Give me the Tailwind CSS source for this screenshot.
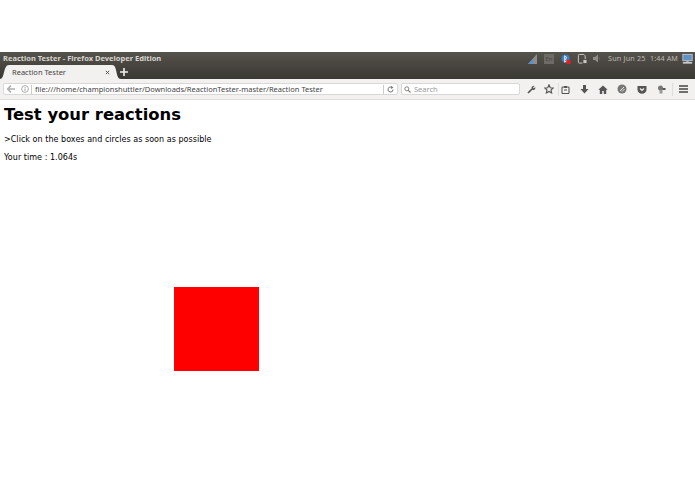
<!DOCTYPE html>
<html>
<head>
<meta charset="utf-8">
<script src="https://cdn.jsdelivr.net/npm/@tailwindcss/browser@4"></script>
</head>
<body class="bg-white m-0 w-[695px] h-[494px] overflow-hidden relative font-['DejaVu_Sans',sans-serif]">
<div class="h-[52px] bg-white"></div>
<div class="h-[27px] bg-gradient-to-b from-[#56524c] to-[#3a3833]">
  <div class="h-[13px] flex items-center justify-between pl-[3px] pr-[2px]">
    <span class="text-[7.500px] font-bold text-[#d8d6d0] font-['Noto_Sans',sans-serif] leading-none">Reaction Tester - Firefox Developer Edition</span>
    <div class="flex items-center text-[#bdbab3]">
      <svg class="w-[9px] h-[10px] mr-[7px]" viewBox="0 0 9 10"><path d="M0 10L9 0v10z" fill="#8d8d8d"/><path d="M0 10l5-5v5z" fill="#5c8fd0"/></svg>
      <span class="w-[10px] h-[10px] mr-[7px] bg-[#6d6b66] text-[6px] leading-[10px] text-center text-[#45433f] font-['Noto_Sans',sans-serif]">En</span>
      <svg class="w-[10px] h-[12px] mr-[6px]" viewBox="0 0 11 12"><circle cx="5" cy="5.500" r="4.500" fill="#3f7cc0"/><path d="M4 2.500l2.500 2-2 1.500 2 2-2.500 1.500z" fill="none" stroke="#fff" stroke-width=".9"/><rect x="6" y="7" width="4.500" height="4.500" fill="#e02020"/></svg>
      <svg class="w-[10px] h-[12px] mr-[6px]" viewBox="0 0 11 12"><path d="M2.500 1h5l1.500 1.500V6M6 10.500H2.500a1 1 0 0 1-1-1V2a1 1 0 0 1 1-1" fill="none" stroke="#c8c6c0" stroke-width="1.100"/><rect x="7" y="7" width="3.500" height="3.500" fill="#c8c6c0"/></svg>
      <svg class="w-[9px] h-[9px] mr-[6px]" viewBox="0 0 9 9"><path d="M0 3h2l3-2.500v8L2 6H0z" fill="#8f8d87"/><path d="M6.500 3v3" stroke="#605e59"/></svg>
      <span class="w-[38px] text-[7.200px] leading-none whitespace-nowrap tracking-[0.2px] font-['Noto_Sans',sans-serif] mr-[4px]">Sun Jun 25</span>
      <span class="w-[26px] text-[7.200px] leading-none whitespace-nowrap tracking-[0.1px] font-['Noto_Sans',sans-serif] mr-[6px]">1:44 AM</span>
      <svg class="w-[11px] h-[12px]" viewBox="0 0 13 12"><rect x="1" y=".5" width="11" height="7.500" fill="#5f93c8" stroke="#c8ccd0"/><rect x="5" y="8" width="3" height="1.500" fill="#b0b0b0"/><rect x="1" y="9.500" width="11" height="2" fill="#c8ccd0"/></svg>
    </div>
  </div>
  <div class="h-[14px] flex items-end">
    <div class="relative w-[121px] h-[14px] flex items-center justify-between pl-[12px] pr-[11px]">
      <svg class="absolute inset-0 w-[121px] h-[14px]" viewBox="0 0 121 14"><path d="M0 14C5 14 3 0 9 0L112 0C118 0 115 14 121 14Z" fill="#f2f1ef"/></svg>
      <span class="relative text-[7.500px] leading-none text-[#444] font-['Noto_Sans',sans-serif] mt-[1px]">Reaction Tester</span>
      <svg class="relative w-[5px] h-[5px]" viewBox="0 0 6 6"><path d="M1 1l4 4M5 1L1 5" stroke="#555" stroke-width="1.200"/></svg>
    </div>
    <svg class="w-[8px] h-[8px] mb-[3px] -ml-px" viewBox="0 0 8 8"><path d="M4 0v8M0 4h8" stroke="#f0f0f0" stroke-width="1.600"/></svg>
  </div>
</div>
<div class="h-[21px] bg-[#f2f1ef] border-b border-[#dcdcda] flex items-center">
  <div class="ml-[3px] w-[395px] h-[12px] bg-white border border-[#d8d8d6] rounded-[2px] flex items-center shrink-0">
    <svg class="w-[8px] h-[8px] ml-[3px] shrink-0" viewBox="0 0 7 7"><path d="M3.500 .5L.5 3.500l3 3M1 3.500h6" fill="none" stroke="#b0b0b0" stroke-width="1.400"/></svg>
    <svg class="w-[8px] h-[8px] ml-[6px] shrink-0" viewBox="0 0 8 8"><circle cx="4" cy="4" r="3.400" fill="none" stroke="#999" stroke-width=".8"/><path d="M4 3.500v2.500M4 2v.8" stroke="#999" stroke-width=".9"/></svg>
    <span class="w-px h-[9px] bg-[#ccc] ml-[2px] shrink-0"></span>
    <span class="ml-[3px] mt-[1px] text-[7.500px] leading-none text-[#444] font-['Noto_Sans',sans-serif] grow whitespace-nowrap">file:///home/championshuttler/Downloads/ReactionTester-master/Reaction Tester</span>
    <span class="w-px h-[9px] bg-[#ccc] shrink-0"></span>
    <svg class="w-[7px] h-[7px] mx-[3px] shrink-0" viewBox="0 0 7 7"><path d="M6 3.500A2.500 2.500 0 1 1 4.500 1.200" fill="none" stroke="#777" stroke-width="1"/><path d="M4 0l2.500 1.500L4 3z" fill="#777"/></svg>
  </div>
  <div class="ml-[3px] w-[119px] h-[12px] bg-white border border-[#d8d8d6] rounded-[2px] flex items-center shrink-0">
    <svg class="w-[7px] h-[7px] ml-[2px]" viewBox="0 0 7 7"><circle cx="2.800" cy="2.800" r="2" fill="none" stroke="#777" stroke-width=".9"/><path d="M4.300 4.300L6.500 6.500" stroke="#777" stroke-width="1.100"/></svg>
    <span class="ml-[3px] mt-[1px] text-[7.500px] leading-none text-[#9a9a9a] font-['Noto_Sans',sans-serif]">Search</span>
  </div>
  <svg class="w-[9px] h-[9px] ml-[7px] shrink-0" viewBox="0 0 9 9"><path d="M1 8l4-4" stroke="#555" stroke-width="1.700"/><path d="M4.500 3a2.200 2.200 0 0 1 3-2L6 2.500 7 3.500 8.200 2a2.200 2.200 0 0 1-3 2.800z" fill="#555"/></svg>
  <svg class="w-[10px] h-[10px] ml-[8px] shrink-0" viewBox="0 0 10 10"><path d="M5 .8l1.300 2.900 3 .3-2.300 2 .7 3L5 7.500 2.300 9l.7-3L.7 4l3-.3z" fill="none" stroke="#555" stroke-width="1.100"/></svg>
  <span class="w-px h-[13px] bg-[#dcdcda] ml-[3.500px] shrink-0"></span>
  <svg class="w-[9px] h-[9px] ml-[2px] shrink-0" viewBox="0 0 9 9"><rect x="1" y="2" width="7" height="6.500" rx=".8" fill="none" stroke="#555" stroke-width="1.100"/><rect x="3" y="1" width="3" height="2" fill="#555"/><path d="M3 5h3" stroke="#555"/></svg>
  <svg class="w-[9px] h-[9px] ml-[10px] shrink-0" viewBox="0 0 9 9"><path d="M3 0h3v4h2.500L4.500 8.500.5 4H3z" fill="#555"/></svg>
  <svg class="w-[10px] h-[9px] ml-[9.500px] shrink-0" viewBox="0 0 10 9"><path d="M5 .5L.3 4.800h1.500V9h2.400V6h1.600v3h2.400V4.800h1.500z" fill="#555"/></svg>
  <svg class="w-[10px] h-[10px] ml-[9px] shrink-0" viewBox="0 0 10 10"><circle cx="5" cy="5" r="4.500" fill="#777"/><path d="M3 7l4-4M5 7.500l2.500-2.500" stroke="#e8e8e8" stroke-width="1"/></svg>
  <svg class="w-[10px] h-[9px] ml-[10px] shrink-0" viewBox="0 0 10 9"><path d="M.5 1h9v3.500a4.500 4.300 0 0 1-9 0z" fill="#555"/><path d="M3 3.500l2 2 2-2" fill="none" stroke="#eee" stroke-width="1.200"/></svg>
  <svg class="w-[9px] h-[9px] ml-[9.500px] shrink-0" viewBox="0 0 9 9"><circle cx="3.500" cy="3" r="2.500" fill="#777"/><rect x="2.500" y="5" width="3" height="3.500" fill="#999"/><rect x="5.500" y="3" width="3" height="2" fill="#555"/></svg>
  <span class="w-px h-[13px] bg-[#dcdcda] ml-[6px] shrink-0"></span>
  <svg class="w-[9px] h-[8px] ml-[6px] shrink-0" viewBox="0 0 9 8"><path d="M0 1h9M0 4h9M0 7h9" stroke="#444" stroke-width="1.500"/></svg>
</div>
<div class="pl-1">
  <h1 class="text-[16.400px] font-bold leading-[23px] text-black mt-[3px]">Test your reactions</h1>
  <p class="text-[8px] tracking-[0.04px] leading-[12px] text-black mt-[8px]">&gt;Click on the boxes and circles as soon as possible</p>
  <p class="text-[8px] tracking-[0.04px] leading-[12px] text-black mt-[6px]">Your time : 1.064s</p>
</div>
<div class="absolute left-[174px] top-[287px] w-[85px] h-[84px] bg-[#ff0000]"></div>
</body>
</html>
